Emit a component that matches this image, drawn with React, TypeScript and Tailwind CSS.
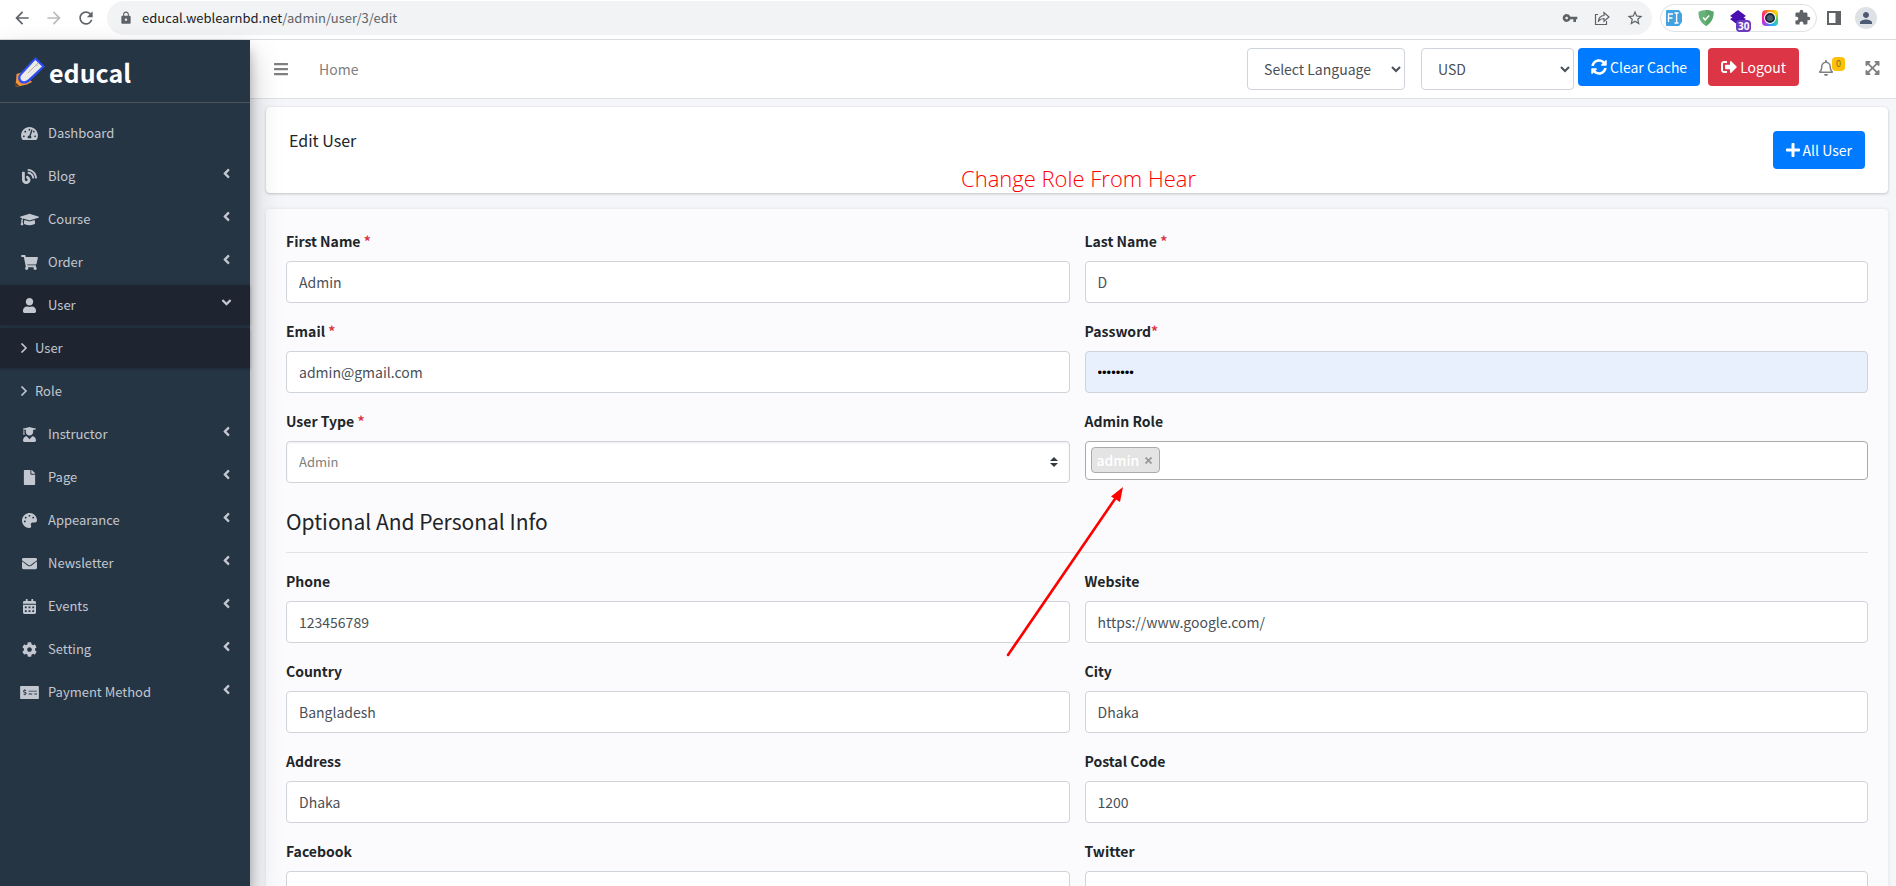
import { useState } from "react";
import type { ReactNode } from "react";
import type { IconType } from "react-icons";
import {
  FaAngleDown, FaAngleLeft, FaBars, FaBlog, FaCalendarAlt, FaCog, FaEnvelope, FaExpandArrowsAlt, FaFile,
  FaGraduationCap, FaMoneyCheckAlt, FaPalette, FaPlus, FaRegBell, FaShoppingCart, FaSignOutAlt, FaSyncAlt,
  FaTachometerAlt, FaUser, FaUserGraduate,
} from "react-icons/fa";
import { MdArrowBack, MdArrowForward, MdExtension, MdLock, MdPerson, MdRefresh, MdStarBorder, MdVpnKey } from "react-icons/md";

type NavEntry = { label: string; icon: IconType; size: string; state?: "closed" | "open" };

const NARROW = "h-[15px] w-[13px]";
const SQUARE = "size-[15px]";
const WIDE = "h-[15px] w-[17px]";
const WIDEST = "h-[15px] w-[19px]";

const NAV: NavEntry[] = [
  { label: "Dashboard", icon: FaTachometerAlt, size: WIDE },
  { label: "Blog", icon: FaBlog, size: SQUARE, state: "closed" },
  { label: "Course", icon: FaGraduationCap, size: WIDEST, state: "closed" },
  { label: "Order", icon: FaShoppingCart, size: WIDE, state: "closed" },
  { label: "User", icon: FaUser, size: NARROW, state: "open" },
  { label: "Instructor", icon: FaUserGraduate, size: NARROW, state: "closed" },
  { label: "Page", icon: FaFile, size: NARROW, state: "closed" },
  { label: "Appearance", icon: FaPalette, size: SQUARE, state: "closed" },
  { label: "Newsletter", icon: FaEnvelope, size: SQUARE, state: "closed" },
  { label: "Events", icon: FaCalendarAlt, size: NARROW, state: "closed" },
  { label: "Setting", icon: FaCog, size: SQUARE, state: "closed" },
  { label: "Payment Method", icon: FaMoneyCheckAlt, size: WIDEST, state: "closed" },
];

function BrowserBar() {
  return (
    <div className="flex h-10 shrink-0 items-center border-b border-[#dadce0] bg-white pb-1 pl-[11px] text-[#5f6368]">
      <button aria-label="Back" className="mr-2.5 p-px"><MdArrowBack size={20} /></button>
      <button aria-label="Forward" className="mr-2.5 p-px text-[#babcbe]"><MdArrowForward size={20} /></button>
      <button aria-label="Reload" className="mr-2.5 p-px"><MdRefresh size={20} /></button>
      <div className="flex h-[34px] min-w-0 flex-1 items-center rounded-full bg-[#f1f3f4] pl-3 pr-2">
        <MdLock size={14} className="mr-[9px]" />
        <div className="flex-1 text-[13px]">
          <span className="text-[#202124]">educal.weblearnbd.net</span>/admin/user/3/edit
        </div>
        <div className="flex items-center gap-4">
          <MdVpnKey size={16} />
          <svg width="16" height="16" viewBox="0 0 16 16" fill="none" stroke="currentColor" strokeWidth="1.2">
            <path d="M4 4.500H1.500v10h11V11" />
            <path d="M4.500 11c.3-3.500 2.200-5.300 5.500-5.500V2.500l5 4.500-5 4.300V8.500c-2.300 0-4 .7-5.500 2.500z" />
          </svg>
          <MdStarBorder size={18} />
        </div>
      </div>
      <div className="ml-2 flex h-7 items-center gap-4 rounded-full border border-[#dfe1e5] px-[5px]">
        <svg width="16" height="16" viewBox="0 0 16 16">
          <path d="M1 0h12l3 4v8l-3 4H1a1 1 0 0 1-1-1V1a1 1 0 0 1 1-1z" fill="#43a3e0" />
          <path d="M2.500 12V4H7M2.500 8h4M8.500 3h1.500l.6.7.6-.7h1.300M8.500 13h1.500l.6-.7.6.7h1.300M10.600 4v8" fill="none" stroke="#fff" strokeWidth="1.300" />
        </svg>
        <svg width="16" height="16" viewBox="0 0 16 16">
          <path d="M8 0c2.600.2 5 .8 7.500 1.800C15.700 8.500 13 13 8 16 3 13 .3 8.500.5 1.800 3 .8 5.400.2 8 0z" fill="#67b279" />
          <path d="M8 0c2.600.2 5 .8 7.500 1.800C15.700 8.500 13 13 8 16z" fill="#5aa66b" />
          <path d="M5 7.500l2.200 2.300L11.200 5.500" fill="none" stroke="#fff" strokeWidth="1.500" />
        </svg>
        <div className="relative">
          <svg width="16" height="16" viewBox="0 0 16 16"><path d="M8 0l8 6-2.500 1.500L16 9l-8 6-8-6 2.500-1.500L0 6z" fill="#4a0fb0" /></svg>
          <span className="absolute left-1.5 top-2.5 rounded-sm bg-[#6b3cc0] px-0.5 font-['Open_Sans',sans-serif] text-[10px] font-bold leading-3 text-white">30</span>
        </div>
        <span className="flex size-4 items-center justify-center rounded bg-[conic-gradient(#f9a01b,#ffd400,#3fd16b,#17b9f2,#7a5cf5,#e81cc8,#ff3b5c,#f9a01b)]">
          <span className="flex size-3 items-center justify-center rounded-full bg-white">
            <span className="size-2.5 rounded-full border-2 border-[#1c2b3a] bg-[#4b5d6e]" />
          </span>
        </span>
        <MdExtension size={17} />
      </div>
      <svg className="ml-2.5" width="14" height="14" viewBox="0 0 14 14">
        <path d="M0 0h14v14H0zM2 2v10h6.500V2z" fill="currentColor" fillRule="evenodd" />
      </svg>
      <button aria-label="Profile" className="ml-3.5 mr-[19px] flex size-[22px] items-center justify-center rounded-full bg-[#dee1e6] text-[#4d5a73]">
        <MdPerson size={18} />
      </button>
    </div>
  );
}

function Logo() {
  return (
    <a href="#home" className="flex h-[63px] shrink-0 items-center gap-1 border-b border-[#4b545c] pl-[15px] pt-0.5 text-white">
      <svg width="30" height="30" viewBox="0 0 30 30">
        <path d="M1.500 17L8 15l9 10-5 2.500L.5 30z" fill="#f29339" />
        <path d="M4.500 17L20.500 0 30 9.500 15 24c-3 3-8 3.500-10.300 1S2.800 19.500 4.500 17z" fill="#2b4df2" />
        <path d="M6.500 18L20.300 3l6.700 6.500L13 22.500c-2.500 2-5 2.300-6.500.8S5 19.800 6.500 18z" fill="#eceae8" />
        <path d="M13 16L23 6M21 9.500l2-2" fill="none" stroke="#b5b0ad" strokeWidth="1" />
        <path d="M0 30l.6-4.500L4.500 29z" fill="#5b3a20" />
      </svg>
      <span className="text-[25px] font-bold leading-8">educal</span>
    </a>
  );
}

function SubItem({ label, active }: { label: string; active?: boolean }) {
  return (
    <li>
      <a href={"#" + label} className={active ? "flex h-10 items-center gap-[7px] bg-[#1e2430] pl-5 shadow-[0_1px_3px_rgba(0,0,0,0.25)]" : "flex h-10 items-center gap-[7px] pl-5"}>
        <svg width="8" height="10" viewBox="0 0 8 10" fill="none" stroke="currentColor" strokeWidth="1.600"><path d="M1.500 .5L6 5 1.500 9.500" /></svg>
        {label}
      </a>
    </li>
  );
}

function Sidebar() {
  return (
    <aside className="z-10 flex w-[250px] shrink-0 flex-col bg-[#263544] shadow-[0_14px_28px_rgba(0,0,0,0.25),0_10px_10px_rgba(0,0,0,0.22)]">
      <Logo />
      <nav className="pt-2.5 text-[13px] text-[#c2c7d0]">
        <ul className="flex flex-col gap-[3px]">
          {NAV.map(({ label, icon: Icon, size, state }) => (
            <li key={label}>
              <a
                href={"#" + label}
                className={state === "open" ? "flex h-10 items-center bg-[#1e2430] pl-5 pr-4 shadow-[0_1px_3px_rgba(0,0,0,0.25)]" : "flex h-10 items-center pl-5 pr-4"}
              >
                <span className="mr-[9px] flex w-[19px] shrink-0 justify-center"><Icon className={size} /></span>
                <span className="flex-1">{label}</span>
                {state === "closed" && <FaAngleLeft size={15} className="mb-1.5" />}
                {state === "open" && <FaAngleDown size={15} className="mb-1.5" />}
              </a>
              {state === "open" && (
                <ul className="mt-[3px] flex flex-col gap-[3px]">
                  <SubItem label="User" active />
                  <SubItem label="Role" />
                </ul>
              )}
            </li>
          ))}
        </ul>
      </nav>
    </aside>
  );
}

function TopBar() {
  return (
    <header className="flex h-[59px] shrink-0 items-start border-b border-[#dee2e6] bg-white pl-6 pr-4 pt-2 text-[#808080]">
      <button aria-label="Toggle menu" className="mt-[13px]"><FaBars className="h-4 w-[14px]" /></button>
      <a href="#home" className="ml-[31px] mt-[9px] flex-1 text-[14px] leading-6">Home</a>
      <select aria-label="Language" className="mr-4 h-[42px] w-[158px] rounded border border-[#ced4da] bg-white px-3 text-[14px] text-[#495057]">
        <option>Select Language</option>
      </select>
      <select aria-label="Currency" className="mr-1 h-[42px] w-[153px] rounded border border-[#ced4da] bg-white px-3 text-[14px] text-[#495057]">
        <option>USD</option>
      </select>
      <button className="mr-2 flex h-[38px] items-center gap-[3px] rounded bg-[#007bff] px-[13px] text-[14px] text-white"><FaSyncAlt className="size-4" />Clear Cache</button>
      <button className="mr-5 flex h-[38px] items-center gap-[3px] rounded bg-[#dc3545] px-[13px] text-[14px] text-white"><FaSignOutAlt className="size-4" />Logout</button>
      <button aria-label="Notifications" className="relative mr-8 mt-3">
        <FaRegBell className="h-4 w-[14px]" />
        <span className="absolute -top-[3px] left-[13px] rounded bg-[#ffc107] px-1 text-[9px] leading-[14px] text-[#7a6a30]">0</span>
      </button>
      <button aria-label="Full screen" className="mt-3"><FaExpandArrowsAlt className="h-4 w-[15px]" /></button>
    </header>
  );
}

function Field({ id, label, mark, children }: { id: string; label: string; mark?: string; children: ReactNode }) {
  return (
    <div>
      <label htmlFor={id} className="mb-2 block whitespace-pre text-[14px] font-bold leading-6 text-[#212529]">
        {label}{mark && <span className="text-[#dc3545]">{mark}</span>}
      </label>
      {children}
    </div>
  );
}

function TextField({ id, label, mark, value }: { id: string; label: string; mark?: string; value: string }) {
  return (
    <Field id={id} label={label} mark={mark}>
      <input id={id} type="text" defaultValue={value} className="block h-[42px] w-full rounded border border-[#ced4da] bg-white px-3 text-[14px] text-[#495057]" />
    </Field>
  );
}

function RoleField() {
  const [roles, setRoles] = useState(["admin"]);
  return (
    <Field id="role" label="Admin Role">
      <div className="flex h-[39px] items-start gap-1 rounded border border-[#aaa] bg-white p-[5px]">
        {roles.map((role) => (
          <span key={role} className="flex h-[26px] items-center gap-1.5 rounded border border-[#aaa] bg-[#e4e4e4] pl-[5px] pr-[7px] text-[14px] font-medium text-white">
            {role}
            <button type="button" aria-label={"Remove " + role} onClick={() => setRoles(roles.filter((r) => r !== role))} className="text-[#999]">
              <svg width="7" height="7" viewBox="0 0 7 7" stroke="currentColor" strokeWidth="1.800"><path d="M.5 .5l6 6M6.500 .5l-6 6" /></svg>
            </button>
          </span>
        ))}
        <input id="role" type="text" className="h-full min-w-0 flex-1 outline-none" />
      </div>
    </Field>
  );
}

export default function App() {
  return (
    <div className="flex h-screen flex-col overflow-hidden bg-[#f4f6f9] font-['Noto_Sans_CJK_SC','Source_Sans_Pro',sans-serif]">
      <BrowserBar />
      <div className="flex min-h-0 flex-1">
        <Sidebar />
        <div className="flex min-w-0 flex-1 flex-col">
          <TopBar />
          <main className="min-h-0 flex-1 overflow-y-auto pb-6 pl-4 pr-2 pt-2 [scrollbar-width:none]">
            <section className="relative mb-4 flex h-[86px] items-start justify-between rounded bg-white px-[23px] pt-[21px] shadow-[0_0_1px_rgba(0,0,0,0.125),0_1px_3px_rgba(0,0,0,0.2)]">
              <h1 className="text-[16px] leading-6 text-[#212529]">Edit User</h1>
              <p className="absolute left-[695px] top-[55px] whitespace-nowrap font-['Open_Sans',sans-serif] text-[22px] font-light leading-8 text-[#ff0000]">Change Role From Hear</p>
              <a href="#users" className="mt-[3px] flex h-[38px] items-center gap-[3px] rounded bg-[#007bff] px-[13px] text-[14px] text-white"><FaPlus className="h-4 w-[14px]" />All User</a>
            </section>

            <form className="relative rounded bg-[#fbfbfd] p-5 shadow-[0_0_4px_rgba(0,0,0,0.08)]">
              <div className="grid grid-cols-2 gap-x-[15px] gap-y-4">
                <TextField id="first" label="First Name " mark="*" value="Admin" />
                <TextField id="last" label="Last Name " mark="*" value="D" />
                <TextField id="email" label="Email " mark="*" value="admin@gmail.com" />
                <Field id="password" label="Password" mark="*">
                  <input id="password" type="password" defaultValue="password" className="block h-[42px] w-full rounded border border-[#ced4da] bg-[#e8f0fe] px-3 font-['Liberation_Sans',sans-serif] text-[13px] text-black" />
                </Field>
                <Field id="type" label="User Type " mark="*">
                  <div className="grid items-center">
                    <select id="type" className="col-start-1 row-start-1 h-[42px] w-full appearance-none rounded border border-[#ced4da] bg-white px-3 text-[13px] text-[#808080] shadow-[inset_0_1px_2px_rgba(0,0,0,0.075)]">
                      <option>Admin</option>
                    </select>
                    <svg className="pointer-events-none col-start-1 row-start-1 mr-3 justify-self-end" width="8" height="10" viewBox="0 0 4 5">
                      <path fill="#343a40" d="M2 0L0 2h4zm0 5L0 3h4z" />
                    </svg>
                  </div>
                </Field>
                <RoleField />
              </div>

              <h2 className="mt-6 text-[21px] leading-7 text-[#212529]">Optional And Personal Info</h2>
              <hr className="mb-4 mt-[17px] border-[#e0e2e5]" />

              <div className="grid grid-cols-2 gap-x-[15px] gap-y-4">
                <TextField id="phone" label="Phone" value="123456789" />
                <TextField id="website" label="Website" value="https://www.google.com/" />
                <TextField id="country" label="Country" value="Bangladesh" />
                <TextField id="city" label="City" value="Dhaka" />
                <TextField id="address" label="Address" value="Dhaka" />
                <TextField id="postal" label="Postal Code" value="1200" />
                <TextField id="facebook" label="Facebook" value="" />
                <TextField id="twitter" label="Twitter" value="" />
              </div>

              <svg className="pointer-events-none absolute left-[740px] top-[278px]" width="120" height="172" viewBox="0 0 120 172">
                <path d="M2 168L111 9" fill="none" stroke="#f00" strokeWidth="2.600" strokeLinecap="round" />
                <path d="M117 0L114 15l-4-2.500-5-3z" fill="#f00" />
              </svg>
            </form>
          </main>
        </div>
      </div>
    </div>
  );
}
